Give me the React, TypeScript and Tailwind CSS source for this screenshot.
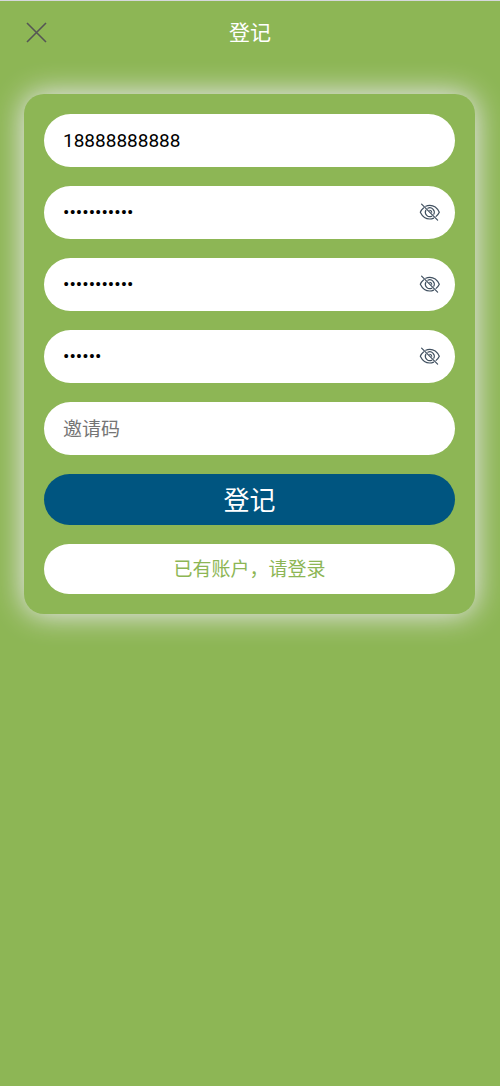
import { useState } from "react";

const fieldClass =
  "h-[53px] w-full rounded-full bg-white px-[19px] text-[19px] text-black outline-none placeholder:text-[#757575]";

function EyeOffIcon() {
  return (
    <svg
      width="22"
      height="20"
      viewBox="0 0 22 20"
      fill="none"
      stroke="#405060"
      strokeWidth="1.2"
      strokeLinecap="round"
      aria-hidden="true"
    >
      <path d="M6.800 3.300C8 2.700 9.400 2.400 10.800 2.400c4.200 0 7.500 2.700 9.500 6.800-.8 1.700-1.900 3.100-3.200 4.200" />
      <path d="M14.600 15.100c-1.200.6-2.500.9-3.800.9-4.200 0-7.500-2.700-9.500-6.800.8-1.700 1.900-3.100 3.200-4.200" />
      <path d="M8.800 5.200a4.500 4.500 0 0 1 6 6" />
      <path d="M12.800 13.200a4.500 4.500 0 0 1-6-6" />
      <path d="M10.800 7.300a2 2 0 0 1 1.900 1.900" />
      <path d="M2.600 1.200 18.600 17.200" />
    </svg>
  );
}

type PasswordFieldProps = {
  label: string;
  value: string;
  onChange: (value: string) => void;
};

function PasswordField({ label, value, onChange }: PasswordFieldProps) {
  const [visible, setVisible] = useState(false);

  return (
    <div className="relative">
      <input
        type={visible ? "text" : "password"}
        aria-label={label}
        value={value}
        onChange={(e) => onChange(e.target.value)}
        className={`${fieldClass} block pr-12`}
      />
      <button
        type="button"
        aria-label="显示密码"
        onClick={() => setVisible(!visible)}
        className="absolute inset-y-0 right-3.5 flex items-center"
      >
        <EyeOffIcon />
      </button>
    </div>
  );
}

export default function App() {
  const [phone, setPhone] = useState("18888888888");
  const [password, setPassword] = useState("88888888888");
  const [confirm, setConfirm] = useState("88888888888");
  const [payPassword, setPayPassword] = useState("888888");
  const [inviteCode, setInviteCode] = useState("");

  return (
    <div className="min-h-screen border-t border-[#d6d8dc] bg-[#8db655] font-[Roboto,'Noto_Sans_CJK_SC',sans-serif]">
      <header className="grid h-[63px] grid-cols-[1fr_auto_1fr] items-center px-6">
        <button type="button" aria-label="关闭" className="justify-self-start">
          <svg width="24" height="24" viewBox="0 0 24 24" stroke="#555" strokeWidth="1.6" aria-hidden="true">
            <path d="M3 2l19 19M22 2L3 21" />
          </svg>
        </button>
        <h1 className="pt-0.5 text-[21px] text-white">登记</h1>
      </header>

      <main className="pt-[30px] pr-[25px] pl-6">
        <form
          onSubmit={(e) => e.preventDefault()}
          className="flex flex-col gap-[19px] rounded-[20px] p-5 shadow-[0_0_30px_#f4ecff]"
        >
          <input
            type="tel"
            aria-label="手机号"
            value={phone}
            onChange={(e) => setPhone(e.target.value)}
            className={fieldClass}
          />
          <PasswordField label="密码" value={password} onChange={setPassword} />
          <PasswordField label="确认密码" value={confirm} onChange={setConfirm} />
          <PasswordField label="支付密码" value={payPassword} onChange={setPayPassword} />
          <input
            type="text"
            aria-label="邀请码"
            placeholder="邀请码"
            value={inviteCode}
            onChange={(e) => setInviteCode(e.target.value)}
            className={`${fieldClass} pt-0.5`}
          />
          <button type="submit" className="h-[51px] rounded-full bg-[#005580] pt-1 text-[26px] text-white">
            登记
          </button>
          <a
            href="#login"
            className="flex h-[50px] items-center justify-center rounded-full bg-white pt-0.5 text-[19px] text-[#8db655]"
          >
            已有账户，请登录
          </a>
        </form>
      </main>
    </div>
  );
}
